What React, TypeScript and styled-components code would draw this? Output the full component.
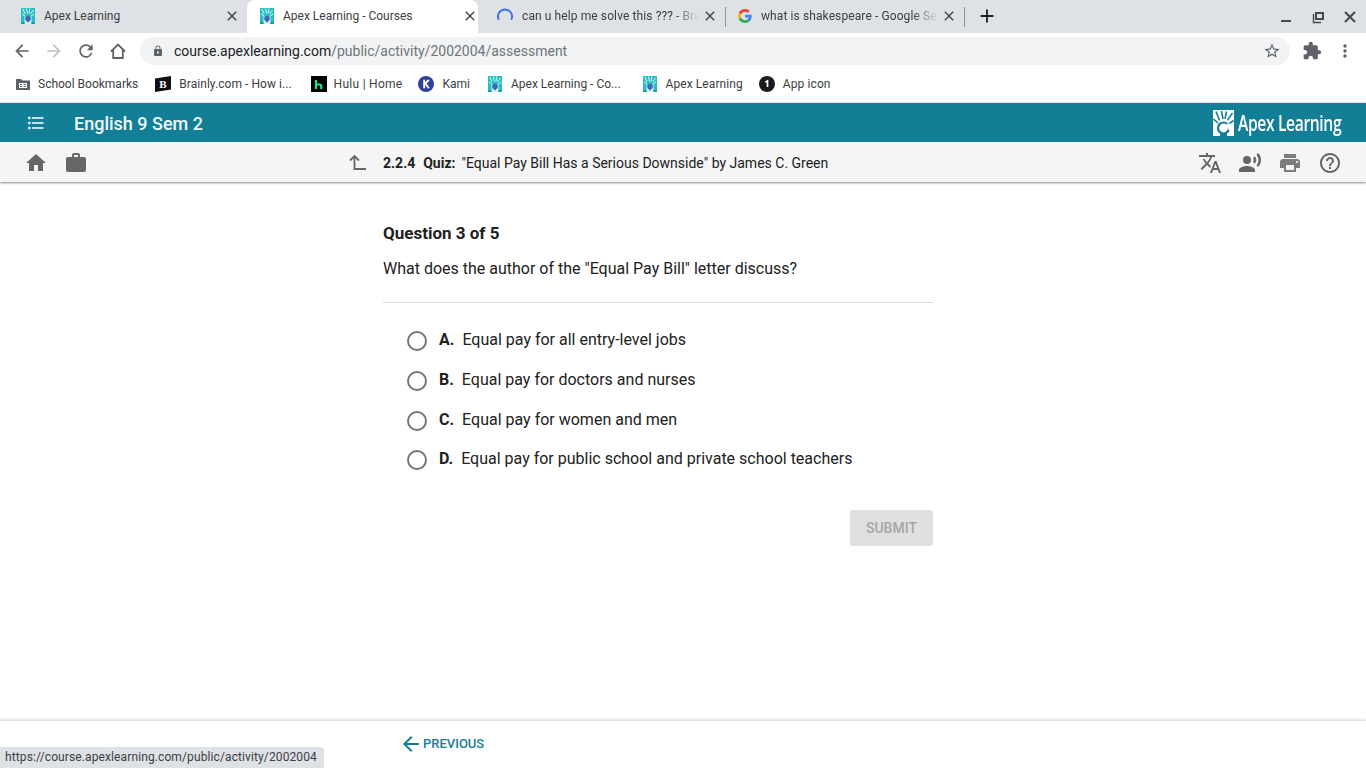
import React from 'react';
import styled, { createGlobalStyle } from 'styled-components';
import {
  MdArrowBack, MdArrowForward, MdRefresh, MdLock, MdStarBorder, MdExtension, MdMoreVert,
  MdHome, MdWork, MdFormatListBulleted, MdTranslate, MdRecordVoiceOver, MdPrint, MdHelpOutline,
  MdClose, MdAdd,
} from 'react-icons/md';

const Global = createGlobalStyle`
  html, body { margin: 0; padding: 0; width: 1366px; height: 768px; overflow: hidden; background: #fff; }
  body { font-family: Roboto, "Liberation Sans", sans-serif; color: #212121; }
  #root { height: 768px; }
`;

const Page = styled.div`
  position: relative;
  width: 1366px;
  height: 768px;
  display: flex;
  flex-direction: column;
  overflow: hidden;
`;

/* ---------- browser chrome ---------- */
const TabStrip = styled.div`
  height: 33px;
  background: #dee1e6;
  display: flex;
  align-items: flex-start;
  flex: none;
`;

const Tab = styled.div<{ $active?: boolean; $w: number; $pad: number; $right: number; $gap: number }>`
  width: ${p => p.$w}px;
  height: 33px;
  padding: 0 ${p => p.$right}px 2px ${p => p.$pad}px;
  box-sizing: border-box;
  display: flex;
  align-items: center;
  gap: ${p => p.$gap}px;
  background: ${p => (p.$active ? '#fff' : 'transparent')};
  border-radius: ${p => (p.$active ? '8px 8px 0 0' : '0')};
  flex: none;
`;

const TabTitle = styled.span<{ $fade?: boolean }>`
  flex: 1;
  min-width: 0;
  font-size: 12px;
  line-height: 16px;
  color: #3c4043;
  white-space: nowrap;
  ${p => p.$fade && `
    margin-right: -6px;
    letter-spacing: 0.1px;
    -webkit-mask-image: linear-gradient(90deg, #000 86%, transparent 100%);
    mask-image: linear-gradient(90deg, #000 86%, transparent 100%);
  `}
`;

const TabClose = styled(MdClose)`
  flex: none;
  width: 16px;
  height: 16px;
  color: #3c4043;
`;

const TabDivider = styled.span`
  flex: none;
  align-self: center;
  width: 1px;
  height: 20px;
  background: #8f9296;
`;

const NewTab = styled(MdAdd)`
  flex: none;
  align-self: center;
  width: 22px;
  height: 22px;
  margin: -2px 0 0 11px;
  color: #202124;
`;

const WindowControls = styled.div`
  margin-left: auto;
  align-self: center;
  display: flex;
  align-items: center;
  gap: 16px;
  padding-right: 8px;
  color: #45484c;
  svg { display: block; }
`;

const Toolbar = styled.div`
  height: 36px;
  background: #fff;
  display: flex;
  align-items: center;
  padding-left: 12px;
  flex: none;
`;

const NavIcons = styled.div`
  display: flex;
  align-items: center;
  gap: 12px;
  color: #5f6368;
  font-size: 20px;
  svg { display: block; }
`;

const Omnibox = styled.div`
  width: 1150px;
  height: 28px;
  margin-left: 12px;
  padding: 0 9px 0 12px;
  box-sizing: border-box;
  border-radius: 14px;
  background: #f1f3f4;
  display: flex;
  align-items: center;
`;

const LockIcon = styled(MdLock)`
  width: 12px;
  height: 12px;
  color: #5f6368;
  flex: none;
`;

const Url = styled.div`
  margin-left: 10px;
  font-size: 14px;
  color: #70757a;
  flex: 1;
  span { color: #202124; }
`;

const StarIcon = styled(MdStarBorder)`
  width: 18px;
  height: 18px;
  color: #5f6368;
`;

const ToolRight = styled.div`
  margin-left: 12px;
  display: flex;
  align-items: center;
  gap: 13px;
  color: #5f6368;
  svg { display: block; }
`;

const Bookmarks = styled.div`
  height: 34px;
  padding: 0 0 4px 15px;
  box-sizing: border-box;
  background: #fff;
  border-bottom: 1px solid #e4e6e9;
  display: flex;
  align-items: center;
  flex: none;
`;

const Bookmark = styled.div<{ $gap: number; $after: number; $track?: number }>`
  display: flex;
  align-items: center;
  gap: ${p => p.$gap}px;
  margin-right: ${p => p.$after}px;
  font-size: 12px;
  letter-spacing: ${p => p.$track ?? 0}px;
  color: #3c4043;
  white-space: nowrap;
  svg { flex: none; display: block; }
`;

/* ---------- app header ---------- */
const AppBar = styled.header`
  height: 39px;
  background: #137f97;
  display: flex;
  align-items: center;
  padding: 0 24px 0 26px;
  flex: none;
`;

const MenuIcon = styled(MdFormatListBulleted)`
  width: 20px;
  height: 20px;
  color: #fff;
  flex: none;
`;

const CourseTitle = styled.div`
  margin: 2px 0 0 28px;
  font-size: 18px;
  font-weight: 500;
  color: #eefafc;
`;

const LogoWrap = styled.div`
  margin-left: auto;
  display: flex;
  align-items: center;
  gap: 4px;
  color: #fff;
`;

const LogoText = styled.span`
  display: inline-block;
  width: 104px;
  font-family: "Open Sans", sans-serif;
  font-size: 21px;
  font-weight: 600;
  letter-spacing: -0.5px;
  white-space: nowrap;
  transform: scaleX(0.745);
  transform-origin: left center;
`;

const SubBar = styled.div`
  height: 40px;
  box-sizing: border-box;
  background: #f5f5f5;
  box-shadow: 0 1px 2px rgba(0, 0, 0, 0.45);
  display: flex;
  align-items: center;
  padding: 2px 24px 0;
  position: relative;
  flex: none;
`;

const SubGroup = styled.div`
  display: flex;
  align-items: center;
  gap: 16px;
  color: #666;
  svg { display: block; }
`;

const UpIcon = styled.svg`
  width: 20px;
  height: 20px;
  margin-left: 259px;
  color: #666;
  flex: none;
`;

const Crumb = styled.div`
  margin-left: 16px;
  display: flex;
  align-items: center;
  font-size: 14px;
  color: #212121;
  white-space: nowrap;
  b { font-weight: 700; }
`;

const CrumbKind = styled.b`
  margin: 0 6px 0 8px;
`;

const SubRight = styled(SubGroup)`
  margin-left: auto;
`;

const PrintIcon = styled(MdPrint)`
  color: #7d7d7d;
`;

/* ---------- quiz ---------- */
const Main = styled.main`
  flex: 1;
  padding: 41px 0 0 383px;
`;

const Quiz = styled.section`
  width: 550px;
`;

const QuestionNo = styled.h2`
  margin: 0;
  font-size: 17px;
  line-height: 20px;
  font-weight: 700;
  color: #212121;
`;

const Prompt = styled.p`
  margin: 16px 0 0;
  padding-bottom: 23px;
  border-bottom: 1px solid #d9d9d9;
  font-size: 16px;
  line-height: 20px;
  color: #212121;
`;

const Options = styled.div`
  margin-top: 17px;
  padding-left: 24px;
  display: flex;
  flex-direction: column;
`;

const Option = styled.label`
  height: 39.67px;
  display: flex;
  align-items: center;
  font-size: 16px;
  color: #212121;
`;

const Radio = styled.span`
  width: 20px;
  height: 20px;
  box-sizing: border-box;
  border: 2px solid #757575;
  border-radius: 50%;
  margin: 3px 12px 0 0;
  flex: none;
`;

const Letter = styled.b`
  font-weight: 700;
  margin-right: 8px;
`;

const Actions = styled.div`
  margin-top: 31px;
  display: flex;
  justify-content: flex-end;
`;

const Submit = styled.button`
  width: 83px;
  height: 36px;
  border: 0;
  border-radius: 3px;
  background: #e0e0e0;
  color: #a6a6a6;
  font-family: Roboto, sans-serif;
  font-size: 14px;
  font-weight: 500;
`;

const Footer = styled.footer`
  height: 47px;
  box-sizing: border-box;
  padding: 0 0 2px 399px;
  background: #fff;
  box-shadow: 0 -1px 3px rgba(0, 0, 0, 0.2);
  display: flex;
  align-items: center;
  flex: none;
`;

const PrevLink = styled.a`
  display: flex;
  align-items: center;
  color: #137f97;
  font-size: 13px;
  font-weight: 500;
  svg { display: block; }
`;

const StatusBubble = styled.div`
  position: absolute;
  left: 0;
  bottom: 0;
  width: 324px;
  height: 21px;
  box-sizing: border-box;
  padding: 0 0 0 5px;
  background: #dee1e6;
  border-top-right-radius: 4px;
  font-size: 12px;
  letter-spacing: 0.11px;
  line-height: 21px;
  color: #3c4043;
  white-space: nowrap;
`;

/* ---------- drawn icons ---------- */
const ApexFavicon = () => (
  <svg width="14" height="16" viewBox="0 0 14 16">
    <rect width="14" height="16" fill="#26bfc2" />
    <path d="M2 1l2 5M5.500 .5l1 5M9 .5l-1 5M12.500 2l-3 4M1 6l3 2M13 6l-3 2" stroke="#dff7f7" strokeWidth="1" />
    <path d="M3.500 8.500h7V16h-7z" fill="#d9f3f4" />
    <circle cx="7" cy="10.500" r="2.800" fill="#3a69b5" />
    <path d="M4.800 12l2.200 2.800 2.200-2.800z" fill="#3a69b5" />
    <path d="M0 14h3.500v2H0zM10.500 14H14v2h-3.500z" fill="#1a9aa8" />
  </svg>
);

const GoogleIcon = () => (
  <svg width="14" height="14" viewBox="0 0 48 48">
    <path fill="#EA4335" d="M24 9.500c3.500 0 6.700 1.200 9.200 3.600l6.900-6.900C35.900 2.400 30.400 0 24 0 14.600 0 6.500 5.400 2.600 13.200l8 6.200C12.500 13.600 17.800 9.500 24 9.500z" />
    <path fill="#4285F4" d="M47 24.500c0-1.600-.1-3.100-.4-4.500H24v9h12.900c-.6 3-2.200 5.500-4.800 7.200l7.700 6C44.300 38 47 31.800 47 24.500z" />
    <path fill="#FBBC05" d="M10.500 28.600c-.5-1.400-.8-3-.8-4.600s.3-3.200.8-4.600l-8-6.200C.9 16.500 0 20.100 0 24s.9 7.500 2.600 10.800l7.900-6.200z" />
    <path fill="#34A853" d="M24 48c6.500 0 11.900-2.100 15.900-5.800l-7.700-6c-2.100 1.400-4.900 2.300-8.200 2.300-6.300 0-11.500-4.200-13.500-9.900l-8 6.200C6.500 42.600 14.600 48 24 48z" />
  </svg>
);

const Spinner = () => (
  <svg width="16" height="16" viewBox="0 0 16 16" fill="none">
    <path d="M1.500 11A7 7 0 1 1 14.500 11" stroke="#3b78e7" strokeWidth="2" strokeLinecap="round" />
  </svg>
);

const Minimize = () => (
  <svg width="16" height="16" viewBox="0 0 16 16"><rect x="3" y="11" width="10" height="2" fill="currentColor" /></svg>
);

const Restore = () => (
  <svg width="16" height="16" viewBox="0 0 16 16" fill="none" stroke="currentColor">
    <path d="M3.500 5v8.500H11" strokeWidth="1.400" />
    <rect x="6" y="4" width="7" height="6" strokeWidth="2" />
  </svg>
);

const WinClose = () => (
  <svg width="16" height="16" viewBox="0 0 16 16" stroke="currentColor" strokeWidth="2"><path d="M3 3l10 10M13 3L3 13" /></svg>
);

const ChromeHome = () => (
  <svg width="20" height="20" viewBox="0 0 20 20" fill="none" stroke="#5f6368" strokeWidth="1.800">
    <path d="M3 10.500L10 3.500l7 7M5.200 9v8h9.600V9" />
  </svg>
);

const FolderIcon = () => (
  <svg width="16" height="16" viewBox="0 0 16 16">
    <path d="M1 3h5l1.500 1.500H15V14H1z" fill="#5f6368" />
    <rect x="4" y="7" width="8" height="5" fill="#fff" />
    <path d="M5 8.500h2M5 10.500h2M8.500 8.500h2.500M8.500 10.500h2.500" stroke="#5f6368" />
  </svg>
);

const BrainlyIcon = () => (
  <svg width="16" height="16" viewBox="0 0 16 16">
    <path d="M0 2.500L16 0v13.500L0 16z" fill="#0f0f14" />
    <text x="8" y="12" textAnchor="middle" fontFamily="Liberation Serif, serif" fontWeight="700" fontSize="11" fill="#fff">B</text>
  </svg>
);

const HuluIcon = () => (
  <svg width="16" height="16" viewBox="0 0 16 16">
    <rect width="16" height="16" fill="#000" />
    <path d="M5 4v9M5 8.500h3.500a1.800 1.800 0 0 1 1.800 1.800V13" stroke="#1ce783" strokeWidth="2.200" fill="none" />
  </svg>
);

const KamiIcon = () => (
  <svg width="16" height="16" viewBox="0 0 16 16">
    <circle cx="8" cy="8" r="8" fill="#31429e" />
    <path d="M6.200 3.800v8.400M6.200 8.500L10.800 4M7.500 7.500l3.300 4.700" stroke="#fff" strokeWidth="1.900" fill="none" />
  </svg>
);

const AppIcon = () => (
  <svg width="16" height="16" viewBox="0 0 16 16">
    <circle cx="8" cy="8" r="8" fill="#1a1a1f" />
    <path d="M6.300 6.200L8.500 5v6" stroke="#fff" strokeWidth="1.700" fill="none" />
  </svg>
);

const ApexLogo = () => (
  <svg width="21" height="26" viewBox="0 0 21 26">
    <rect width="21" height="26" fill="#fff" />
    <g stroke="#137f97" strokeWidth="1.600" fill="none">
      <path d="M3 1.500l3.500 9M8.500 1l1.500 8M13.500 1.500l-1.500 7.500M19.500 3l-5 7M.5 9l4.500 4M20.500 10.500l-4 3" />
      <circle cx="10.500" cy="18" r="5.500" strokeWidth="2.200" />
    </g>
    <path d="M7 26v-2.500h7V26z" fill="#137f97" />
    <path d="M13 13.500l8 2v5h-5z" fill="#fff" />
  </svg>
);

const UpCorner = () => (
  <UpIcon viewBox="0 0 20 20" fill="none" stroke="currentColor" strokeWidth="1.800">
    <path d="M3 7.500L7.500 3 12 7.500M7.500 3.500V16H19" />
  </UpIcon>
);

export default function App() {
  return (
    <Page>
      <Global />
      <TabStrip>
        <Tab $w={247} $pad={21} $right={7} $gap={9}>
          <ApexFavicon />
          <TabTitle>Apex Learning</TabTitle>
          <TabClose />
        </Tab>
        <Tab $active $w={231} $pad={13} $right={0} $gap={9}>
          <ApexFavicon />
          <TabTitle>Apex Learning - Courses</TabTitle>
          <TabClose />
        </Tab>
        <Tab $w={247} $pad={19} $right={7} $gap={9}>
          <Spinner />
          <TabTitle $fade>can u help me solve this ??? - Bra</TabTitle>
          <TabClose />
        </Tab>
        <TabDivider />
        <Tab $w={238} $pad={12} $right={7} $gap={9}>
          <GoogleIcon />
          <TabTitle $fade>what is shakespeare - Google Se</TabTitle>
          <TabClose />
        </Tab>
        <TabDivider />
        <NewTab />
        <WindowControls>
          <Minimize />
          <Restore />
          <WinClose />
        </WindowControls>
      </TabStrip>

      <Toolbar>
        <NavIcons>
          <MdArrowBack />
          <MdArrowForward color="#bfc2c6" />
          <MdRefresh />
          <ChromeHome />
        </NavIcons>
        <Omnibox>
          <LockIcon />
          <Url><span>course.apexlearning.com</span>/public/activity/2002004/assessment</Url>
          <StarIcon />
        </Omnibox>
        <ToolRight>
          <MdExtension size={20} />
          <MdMoreVert size={20} />
        </ToolRight>
      </Toolbar>

      <Bookmarks>
        <Bookmark $gap={7} $after={17}><FolderIcon />School Bookmarks</Bookmark>
        <Bookmark $gap={8} $after={19} $track={0.05}><BrainlyIcon />Brainly.com - How i...</Bookmark>
        <Bookmark $gap={7} $after={16} $track={0.27}><HuluIcon />Hulu | Home</Bookmark>
        <Bookmark $gap={8} $after={18}><KamiIcon />Kami</Bookmark>
        <Bookmark $gap={9} $after={22}><ApexFavicon />Apex Learning - Co...</Bookmark>
        <Bookmark $gap={9} $after={16} $track={0.08}><ApexFavicon />Apex Learning</Bookmark>
        <Bookmark $gap={8} $after={0} $track={0.1}><AppIcon />App icon</Bookmark>
      </Bookmarks>

      <AppBar>
        <MenuIcon />
        <CourseTitle>English 9 Sem 2</CourseTitle>
        <LogoWrap>
          <ApexLogo />
          <LogoText>Apex Learning</LogoText>
        </LogoWrap>
      </AppBar>

      <SubBar>
        <SubGroup>
          <MdHome size={24} />
          <MdWork size={24} />
        </SubGroup>
        <UpCorner />
        <Crumb>
          <b>2.2.4</b>
          <CrumbKind>Quiz:</CrumbKind>
          "Equal Pay Bill Has a Serious Downside" by James C. Green
        </Crumb>
        <SubRight>
          <MdTranslate size={24} />
          <MdRecordVoiceOver size={24} />
          <PrintIcon size={24} />
          <MdHelpOutline size={24} />
        </SubRight>
      </SubBar>

      <Main>
        <Quiz>
          <QuestionNo>Question 3 of 5</QuestionNo>
          <Prompt>What does the author of the "Equal Pay Bill" letter discuss?</Prompt>
          <Options>
            <Option><Radio /><Letter>A.</Letter>Equal pay for all entry-level jobs</Option>
            <Option><Radio /><Letter>B.</Letter>Equal pay for doctors and nurses</Option>
            <Option><Radio /><Letter>C.</Letter>Equal pay for women and men</Option>
            <Option><Radio /><Letter>D.</Letter>Equal pay for public school and private school teachers</Option>
          </Options>
          <Actions>
            <Submit disabled>SUBMIT</Submit>
          </Actions>
        </Quiz>
      </Main>

      <Footer>
        <PrevLink>
          <MdArrowBack size={24} />
          PREVIOUS
        </PrevLink>
      </Footer>

      <StatusBubble>https://course.apexlearning.com/public/activity/2002004</StatusBubble>
    </Page>
  );
}
